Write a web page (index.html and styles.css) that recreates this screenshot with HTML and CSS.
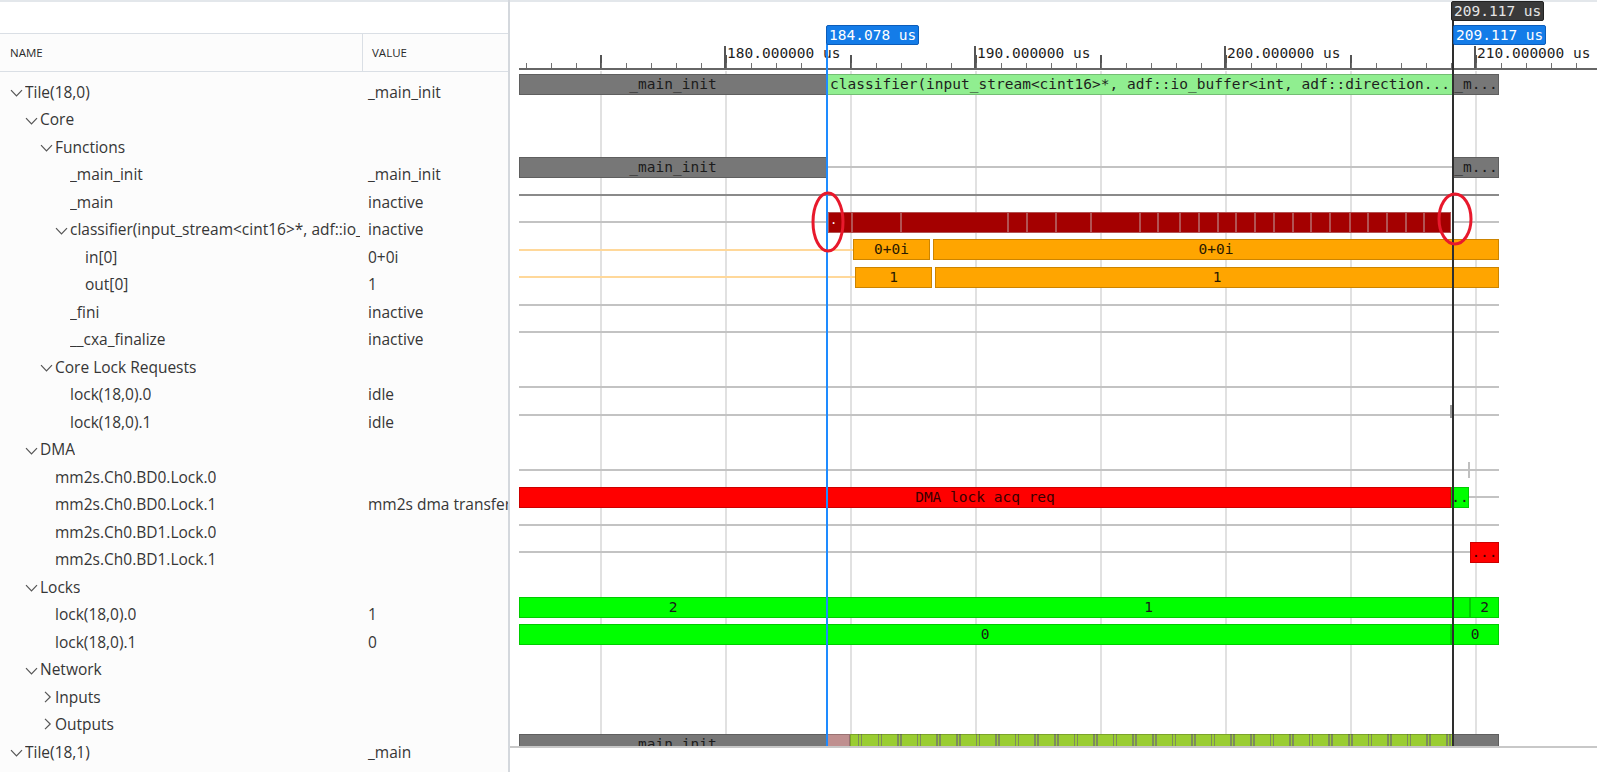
FILE: index.html
```html
<!DOCTYPE html>
<html>
<head>
<meta charset="utf-8">
<link rel="stylesheet" href="styles.css">
</head>
<body>
<div class="app">
  <aside class="side">
    <div class="side-top"></div>
    <div class="cols"><div class="ncol">NAME</div><div class="vcol">VALUE</div></div>
    <div class="tree">
      <div class="row"><div class="name l0"><span class="tw"><svg class="cd" viewBox="0 0 13 8"><path d="M1 1.2 6.5 6.8 12 1.2"/></svg></span><span class="tx">Tile(18,0)</span></div><div class="val">_main_init</div></div>
      <div class="row"><div class="name l1"><span class="tw"><svg class="cd" viewBox="0 0 13 8"><path d="M1 1.2 6.5 6.8 12 1.2"/></svg></span><span class="tx">Core</span></div><div class="val"></div></div>
      <div class="row"><div class="name l2"><span class="tw"><svg class="cd" viewBox="0 0 13 8"><path d="M1 1.2 6.5 6.8 12 1.2"/></svg></span><span class="tx">Functions</span></div><div class="val"></div></div>
      <div class="row"><div class="name l3"><span class="tw"></span><span class="tx">_main_init</span></div><div class="val">_main_init</div></div>
      <div class="row"><div class="name l3"><span class="tw"></span><span class="tx">_main</span></div><div class="val">inactive</div></div>
      <div class="row"><div class="name l3"><span class="tw"><svg class="cd" viewBox="0 0 13 8"><path d="M1 1.2 6.5 6.8 12 1.2"/></svg></span><span class="tx">classifier(input_stream&lt;cint16&gt;*, adf::io_buffer&lt;int, adf::direction::out&gt;*)</span></div><div class="val">inactive</div></div>
      <div class="row"><div class="name l4"><span class="tw"></span><span class="tx">in[0]</span></div><div class="val">0+0i</div></div>
      <div class="row"><div class="name l4"><span class="tw"></span><span class="tx">out[0]</span></div><div class="val">1</div></div>
      <div class="row"><div class="name l3"><span class="tw"></span><span class="tx">_fini</span></div><div class="val">inactive</div></div>
      <div class="row"><div class="name l3"><span class="tw"></span><span class="tx">__cxa_finalize</span></div><div class="val">inactive</div></div>
      <div class="row"><div class="name l2"><span class="tw"><svg class="cd" viewBox="0 0 13 8"><path d="M1 1.2 6.5 6.8 12 1.2"/></svg></span><span class="tx">Core Lock Requests</span></div><div class="val"></div></div>
      <div class="row"><div class="name l3"><span class="tw"></span><span class="tx">lock(18,0).0</span></div><div class="val">idle</div></div>
      <div class="row"><div class="name l3"><span class="tw"></span><span class="tx">lock(18,0).1</span></div><div class="val">idle</div></div>
      <div class="row"><div class="name l1"><span class="tw"><svg class="cd" viewBox="0 0 13 8"><path d="M1 1.2 6.5 6.8 12 1.2"/></svg></span><span class="tx">DMA</span></div><div class="val"></div></div>
      <div class="row"><div class="name l2"><span class="tw"></span><span class="tx">mm2s.Ch0.BD0.Lock.0</span></div><div class="val"></div></div>
      <div class="row"><div class="name l2"><span class="tw"></span><span class="tx">mm2s.Ch0.BD0.Lock.1</span></div><div class="val">mm2s dma transfer</div></div>
      <div class="row"><div class="name l2"><span class="tw"></span><span class="tx">mm2s.Ch0.BD1.Lock.0</span></div><div class="val"></div></div>
      <div class="row"><div class="name l2"><span class="tw"></span><span class="tx">mm2s.Ch0.BD1.Lock.1</span></div><div class="val"></div></div>
      <div class="row"><div class="name l1"><span class="tw"><svg class="cd" viewBox="0 0 13 8"><path d="M1 1.2 6.5 6.8 12 1.2"/></svg></span><span class="tx">Locks</span></div><div class="val"></div></div>
      <div class="row"><div class="name l2"><span class="tw"></span><span class="tx">lock(18,0).0</span></div><div class="val">1</div></div>
      <div class="row"><div class="name l2"><span class="tw"></span><span class="tx">lock(18,0).1</span></div><div class="val">0</div></div>
      <div class="row"><div class="name l1"><span class="tw"><svg class="cd" viewBox="0 0 13 8"><path d="M1 1.2 6.5 6.8 12 1.2"/></svg></span><span class="tx">Network</span></div><div class="val"></div></div>
      <div class="row"><div class="name l2"><span class="tw"><svg class="cr" viewBox="0 0 13 12"><path d="M5 0.8 10.2 6 5 11.2"/></svg></span><span class="tx">Inputs</span></div><div class="val"></div></div>
      <div class="row"><div class="name l2"><span class="tw"><svg class="cr" viewBox="0 0 13 12"><path d="M5 0.8 10.2 6 5 11.2"/></svg></span><span class="tx">Outputs</span></div><div class="val"></div></div>
      <div class="row"><div class="name l0"><span class="tw"><svg class="cd" viewBox="0 0 13 8"><path d="M1 1.2 6.5 6.8 12 1.2"/></svg></span><span class="tx">Tile(18,1)</span></div><div class="val">_main</div></div>
    </div>
  </aside>

  <main class="wave">
    <div class="ruler">
      <div class="scale">
        <div class="mark" style="left:205px"><span>180.000000 us</span></div>
        <div class="mark" style="left:455px"><span>190.000000 us</span></div>
        <div class="mark" style="left:705px"><span>200.000000 us</span></div>
        <div class="mark" style="left:955px"><span>210.000000 us</span></div>
      </div>
    </div>

    <div class="tracks">
      <div class="track">
        <div class="bar gray" style="left:9px;width:308px">_main_init</div>
        <div class="bar lgreen" style="left:317px;width:626px">classifier(input_stream&lt;cint16&gt;*, adf::io_buffer&lt;int, adf::direction...</div>
        <div class="bar gray" style="left:943px;width:46px">_m...</div>
      </div>
      <div class="track"></div>
      <div class="track"></div>
      <div class="track">
        <div class="bar gray" style="left:9px;width:308px">_main_init</div>
        <div class="ln" style="left:317px;width:626px"></div>
        <div class="bar gray" style="left:943px;width:46px">_m...</div>
      </div>
      <div class="track"><div class="ln dark" style="left:9px;width:980px"></div></div>
      <div class="track">
        <div class="ln" style="left:9px;width:309px"></div>
        <div class="bar segs" style="left:318px;width:623px">
          <i class="dr first" style="width:24px">.</i><i class="dr" style="width:49px"></i><i class="dr" style="width:107px"></i><i class="dr" style="width:19px"></i><i class="dr" style="width:29px"></i><i class="dr" style="width:35px"></i><i class="dr" style="width:49px"></i><i class="dr" style="width:18px"></i><i class="dr" style="width:22px"></i><i class="dr" style="width:19px"></i><i class="dr" style="width:19px"></i><i class="dr" style="width:18px"></i><i class="dr" style="width:19px"></i><i class="dr" style="width:19px"></i><i class="dr" style="width:19px"></i><i class="dr" style="width:18px"></i><i class="dr" style="width:19px"></i><i class="dr" style="width:20px"></i><i class="dr" style="width:18px"></i><i class="dr" style="width:19px"></i><i class="dr" style="width:19px"></i><i class="dr" style="width:18px"></i><i class="dr" style="width:27px"></i>
        </div>
        <div class="ln" style="left:943px;width:46px"></div>
      </div>
      <div class="track">
        <div class="ln orange" style="left:9px;width:334px"></div>
        <div class="bar orange" style="left:343px;width:77px">0+0i</div>
        <div class="bar orange" style="left:423px;width:566px">0+0i</div>
      </div>
      <div class="track">
        <div class="ln orange" style="left:9px;width:336px"></div>
        <div class="bar orange" style="left:345px;width:77px">1</div>
        <div class="bar orange" style="left:425px;width:564px">1</div>
      </div>
      <div class="track"><div class="ln" style="left:9px;width:980px"></div></div>
      <div class="track"><div class="ln" style="left:9px;width:980px"></div></div>
      <div class="track"></div>
      <div class="track"><div class="ln" style="left:9px;width:980px"></div></div>
      <div class="track">
        <div class="ln" style="left:9px;width:980px"></div>
        <div class="vt" style="left:940px;top:4px;height:13px"></div>
      </div>
      <div class="track"></div>
      <div class="track">
        <div class="ln" style="left:9px;width:980px"></div>
        <div class="vt light" style="left:958px;top:6px;height:16px"></div>
      </div>
      <div class="track">
        <div class="bar red" style="left:9px;width:932px">DMA lock acq req</div>
        <div class="bar lime" style="left:941px;width:18px">..</div>
        <div class="ln" style="left:959px;width:30px"></div>
      </div>
      <div class="track"><div class="ln" style="left:9px;width:980px"></div></div>
      <div class="track">
        <div class="ln" style="left:9px;width:951px"></div>
        <div class="bar red" style="left:960px;width:29px">...</div>
      </div>
      <div class="track"></div>
      <div class="track">
        <div class="bar lime" style="left:9px;width:308px">2</div>
        <div class="bar lime" style="left:317px;width:643px">1</div>
        <div class="bar lime" style="left:960px;width:29px">2</div>
      </div>
      <div class="track">
        <div class="bar lime" style="left:9px;width:932px">0</div>
        <div class="bar lime" style="left:941px;width:48px">0</div>
      </div>
      <div class="track"></div>
      <div class="track"></div>
      <div class="track"></div>
      <div class="track">
        <div class="bar gray" style="left:9px;width:308px">_main_init</div>
        <div class="bar rosy" style="left:317px;width:23px"></div>
        <div class="bar ygreen" style="left:340px;width:603px"></div>
        <div class="bar gray" style="left:943px;width:46px"></div>
      </div>
    </div>
    <div class="foot"></div>

    <div class="cur blue" style="left:316px;top:44px;height:702px"></div>
    <div class="cur blue" style="left:942px;top:44px;height:702px"></div>
    <div class="cur dark" style="left:942px;top:20px;height:726px"></div>
    <div class="tag blue" style="left:316px;top:25px">184.078 us</div>
    <div class="tag dark" style="left:941px;top:1px">209.117 us</div>
    <div class="tag blue" style="left:943px;top:25px">209.117 us</div>

    <svg class="notes" width="1087" height="772" viewBox="0 0 1087 772">
      <ellipse cx="318" cy="222" rx="15" ry="29"/>
      <ellipse cx="945" cy="219" rx="16" ry="25"/>
    </svg>
  </main>
</div>
</body>
</html>
```
FILE: styles.css
```css
* { box-sizing: border-box; }
html, body { margin: 0; padding: 0; }
body {
  width: 1597px;
  height: 772px;
  overflow: hidden;
  background: #fff;
  font-family: "Open Sans", "Noto Sans", sans-serif;
}
.app { display: flex; height: 772px; }

/* left tree panel */
.side {
  width: 510px;
  flex: none;
  border-right: 2px solid #d4d8dd;
  background: #fcfcfc;
  display: flex;
  flex-direction: column;
  overflow: hidden;
}
.side-top {
  height: 34px;
  flex: none;
  background: #fff;
  border-top: 2px solid #e3e7eb;
  border-bottom: 1px solid #dadfe5;
}
.cols {
  display: grid;
  grid-template-columns: 362px 1fr;
  height: 38px;
  flex: none;
  border-bottom: 1px solid #dadfe5;
  font-size: 11.5px;
  color: #2a2a2a;
}
.cols div { display: flex; align-items: center; }
.cols .ncol { padding-left: 10px; }
.cols .vcol { border-left: 1px solid #dadfe5; padding-left: 9px; }
.tree { padding-top: 6px; }
.row {
  display: grid;
  grid-template-columns: 362px 146px;
  height: 27.5px;
  font-size: 15.5px;
  color: #363636;
  white-space: nowrap;
}
.name { display: flex; align-items: center; overflow: hidden; padding-right: 2px; }
.tx { overflow: hidden; min-width: 0; }
.val { display: flex; align-items: center; overflow: hidden; padding-left: 6px; }
.tw { width: 15px; flex: none; display: flex; align-items: center; }
.l0 { padding-left: 10px; }
.l1 { padding-left: 25px; }
.l2 { padding-left: 40px; }
.l3 { padding-left: 55px; }
.l4 { padding-left: 70px; }
.cd { width: 13px; height: 8px; margin-top: 3px; fill: none; stroke: #555; stroke-width: 1.2; }
.cr { width: 13px; height: 12px; fill: none; stroke: #555; stroke-width: 1.2; }

/* waveform panel */
.wave { flex: 1; position: relative; overflow: hidden; background: #fff; }
.ruler { height: 71px; position: relative; border-top: 2px solid #e3e7eb; }
.scale {
  position: absolute;
  left: 9px;
  right: 0;
  bottom: 1px;
  height: 24px;
  border-bottom: 2px solid #666;
  background-image:
    linear-gradient(to right, #707070 0 1.5px, transparent 1.5px),
    linear-gradient(to right, #555 0 2px, transparent 2px);
  background-size: 25px 5px, 125px 13px;
  background-position: 7px 100%, 81px 100%;
  background-repeat: repeat-x;
}
.mark {
  position: absolute;
  bottom: 0;
  height: 22px;
  border-left: 2px solid #555;
}
.mark span {
  position: absolute;
  left: 1px;
  top: -2px;
  font: 14.5px/18px "DejaVu Sans Mono", monospace;
  color: #1e1e1e;
  white-space: nowrap;
}

.tracks {
  height: 675px;
  overflow: hidden;
  background-image: linear-gradient(to right, #e1e1e1 0 2px, transparent 2px);
  background-size: 125px 100%;
  background-position: 90px 0;
  background-repeat: repeat-x;
}
.track { position: relative; height: 27.5px; }
.bar {
  position: absolute;
  top: 3.25px;
  height: 21px;
  overflow: hidden;
  white-space: nowrap;
  text-align: center;
  font: 14.5px/20px "DejaVu Sans Mono", monospace;
  color: #222;
  box-shadow: inset 0 0 0 1px rgba(0, 0, 0, 0.2);
}
.bar.gray { background: #777; color: #1c1c1c; }
.bar.lgreen { background: #90ee90; color: #1e1e1e; }
.bar.orange { background: #ffa500; color: #2a1a00; }
.bar.red { background: #ff0000; color: #3a0000; }
.bar.lime { background: #00ff00; color: #1a1a1a; }
.bar.rosy { background: #bf8f8f; }
.bar.ygreen {
  background-color: #9acd32;
  background-image: repeating-linear-gradient(to right,
    transparent 0 8px, #7d8c5c 8px 9.5px, transparent 9.5px 11px,
    #7d8c5c 11px 12.5px, transparent 12.5px 19.6px);
}
.bar.segs { display: flex; box-shadow: none; }
.dr {
  display: block;
  flex: none;
  height: 21px;
  background: #a40000;
  box-shadow: inset 0 0 0 1px rgba(190, 150, 150, 0.55);
  font-style: normal;
}
.dr.first { color: #fff; text-align: left; padding-left: 2px; line-height: 16px; font-size: 12px; }
.ln { position: absolute; top: 12.75px; height: 2px; background: #c3c3c3; }
.ln.dark { background: #8a8a8a; }
.ln.orange { background: #ffd89a; }
.vt { position: absolute; width: 2px; background: #9a9a9a; }
.vt.light { background: #c0c0c0; }
.foot { border-top: 2px solid #c8c8c8; height: 26px; }

.cur { position: absolute; width: 2px; }
.cur.blue { background: #1e8bff; }
.cur.dark { background: #2e2e2e; }
.tag {
  position: absolute;
  padding: 0 2px;
  border-radius: 2px;
  white-space: nowrap;
  font: 14.5px/18px "DejaVu Sans Mono", monospace;
}
.tag.blue { background: #147ce8; color: #fff; border: 1px solid #0c5dba; }
.tag.dark { background: #3a3a3a; color: #e6e6e6; border: 1px solid #222; }
.notes {
  position: absolute;
  left: 0;
  top: 0;
  pointer-events: none;
  fill: none;
  stroke: #e8192c;
  stroke-width: 3;
}
```
